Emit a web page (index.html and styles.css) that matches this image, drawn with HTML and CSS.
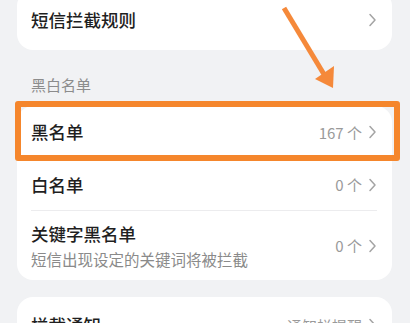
FILE: index.html
```html
<!DOCTYPE html>
<html lang="zh-CN">
<head>
  <meta charset="UTF-8" />
  <meta name="viewport" content="width=device-width, initial-scale=1.0" />
  <title>短信拦截</title>
  <link rel="stylesheet" href="styles.css">
</head>
<body>
  <div class="page">
    <div class="card card-top">
      <div class="row">
        <span class="title">短信拦截规则</span>
        <span class="right">
          <svg class="chevron" viewBox="0 0 8 14"><polyline points="1.5,1.5 6.5,7 1.5,12.5" /></svg>
        </span>
      </div>
    </div>

    <div class="section-label">黑白名单</div>

    <div class="card">
      <div class="row row-first">
        <span class="title">黑名单</span>
        <span class="right">
          <span class="value">167 个</span>
          <svg class="chevron" viewBox="0 0 8 14"><polyline points="1.5,1.5 6.5,7 1.5,12.5" /></svg>
        </span>
        <div class="highlight"></div>
      </div>
      <div class="row row-second">
        <span class="title">白名单</span>
        <span class="right">
          <span class="value">0 个</span>
          <svg class="chevron" viewBox="0 0 8 14"><polyline points="1.5,1.5 6.5,7 1.5,12.5" /></svg>
        </span>
      </div>
      <div class="row row-tall">
        <div class="texts">
          <span class="title">关键字黑名单</span>
          <span class="subtitle">短信出现设定的关键词将被拦截</span>
        </div>
        <span class="right">
          <span class="value">0 个</span>
          <svg class="chevron" viewBox="0 0 8 14"><polyline points="1.5,1.5 6.5,7 1.5,12.5" /></svg>
        </span>
      </div>
    </div>

    <div class="card card-bottom">
      <div class="row">
        <span class="title">拦截通知</span>
        <span class="right">
          <span class="value">通知栏提醒</span>
          <svg class="chevron" viewBox="0 0 8 14"><polyline points="1.5,1.5 6.5,7 1.5,12.5" /></svg>
        </span>
      </div>
    </div>

    <!-- annotation arrow -->
    <svg class="arrow" viewBox="0 0 410 323">
      <line x1="284" y1="8" x2="325" y2="76" />
      <polygon points="315,79 334,66 333,88" />
    </svg>
  </div>
</body>
</html>
```

FILE: styles.css
```css
* {
  box-sizing: border-box;
  margin: 0;
  padding: 0;
}

body {
  background-color: #f1f2f4;
  font-family: "Noto Sans CJK SC", "Noto Sans", sans-serif;
  color: #1f1f1f;
  overflow: hidden;
}

.page {
  position: relative;
  width: 410px;
  height: 323px;
  padding: 0 18px 0 17px;
  overflow: hidden;
}

.card {
  background-color: #fff;
  border-radius: 16px;
  padding: 0 15px 0 14px;
}

.card-top {
  margin-top: -10px;
}

.card-bottom {
  margin-top: 17px;
}

.row {
  position: relative;
  display: flex;
  align-items: center;
  justify-content: space-between;
  height: 60px;
}

.row-first {
  height: 53px;
  border-bottom: 1px solid #ececee;
}

.row-second {
  height: 52px;
  border-bottom: 1px solid #ececee;
}

.row-tall {
  height: 69px;
}

.card-bottom .row {
  height: 56px;
}

.title {
  font-size: 17.5px;
  font-weight: 500;
  line-height: 22px;
  color: #1f1f1f;
}

.texts {
  display: flex;
  flex-direction: column;
  gap: 4px;
}

.subtitle {
  font-size: 15.5px;
  line-height: 20px;
  color: #8a8a8a;
}

.section-label {
  margin: 25px 0 11px 14px;
  font-size: 15px;
  line-height: 20px;
  color: #8c8c8c;
}

.right {
  display: flex;
  align-items: center;
  gap: 6px;
}

.value {
  font-size: 15px;
  color: #9a9a9a;
}

.chevron {
  width: 9px;
  height: 14px;
  fill: none;
  stroke: #a4a4a4;
  stroke-width: 1.5;
  stroke-linecap: round;
  stroke-linejoin: round;
}

.highlight {
  position: absolute;
  left: -16px;
  right: -23px;
  top: -5px;
  bottom: -3px;
  border: 6px solid #f5862c;
  border-radius: 3px;
  pointer-events: none;
}

.arrow {
  position: absolute;
  left: 0;
  top: 0;
  width: 410px;
  height: 323px;
  pointer-events: none;
}

.arrow line {
  stroke: #f5893a;
  stroke-width: 5;
}

.arrow polygon {
  fill: #f5893a;
}
```
